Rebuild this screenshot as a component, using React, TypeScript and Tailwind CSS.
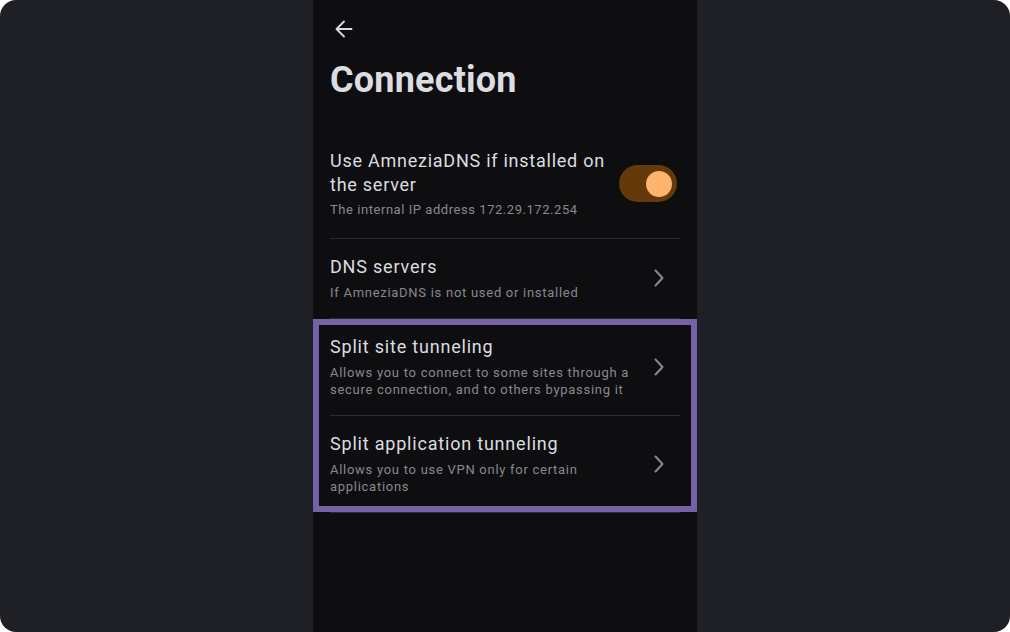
import React, { useState } from 'react';

interface Row {
  id: string;
  title: string;
  description: string;
}

const splitRows: Row[] = [
  {
    id: 'sites',
    title: 'Split site tunneling',
    description: 'Allows you to connect to some sites through a secure connection, and to others bypassing it',
  },
  {
    id: 'apps',
    title: 'Split application tunneling',
    description: 'Allows you to use VPN only for certain applications',
  },
];

const Chevron: React.FC = () => (
  <svg width="10" height="18" viewBox="0 0 10 18" fill="none" className="mr-[16px] shrink-0">
    <path d="M1.5 1.5L8.5 9L1.5 16.5" stroke="#878a90" strokeWidth="2" strokeLinecap="round" strokeLinejoin="round" />
  </svg>
);

const NavRow: React.FC<{ row: Row }> = ({ row }) => (
  <div className="flex items-center justify-between pt-4 pb-[17px] border-b border-[#2a2b30]">
    <div className="w-[308px]">
      <p className="text-[18px] leading-[24px] tracking-[0.8px] text-[#dcdde0]">{row.title}</p>
      <p className="mt-[5px] text-[13px] leading-[17px] tracking-[0.72px] text-[#87898f]">{row.description}</p>
    </div>
    <Chevron />
  </div>
);

const Connection: React.FC = () => {
  const [amneziaDns, setAmneziaDns] = useState(true);

  return (
    <div className="w-[1010px] h-[632px] bg-white">
      <div
        className="w-full h-full rounded-[16px] bg-[#1f2025] flex justify-center overflow-hidden"
        style={{ fontFamily: 'Roboto, "Noto Sans", sans-serif' }}
      >
        <div className="w-[384px] h-full bg-[#0e0e11] px-[17px]">
          {/* Header */}
          <div className="pt-[20px] pl-[5px]">
            <svg width="18" height="18" viewBox="0 0 18 18" fill="none">
              <path
                d="M16.5 9H1.8M9 1.5L1.5 9L9 16.5"
                stroke="#dcdde0"
                strokeWidth="1.8"
                strokeLinecap="round"
                strokeLinejoin="round"
              />
            </svg>
          </div>
          <h1 className="mt-[20px] mb-[31px] text-[36px] leading-[44px] font-bold tracking-[0.2px] text-[#dcdde0]">Connection</h1>

          {/* AmneziaDNS toggle */}
          <div className="flex items-center justify-between pt-4 pb-[20px] border-b border-[#2a2b30]">
            <div className="w-[292px]">
              <p className="text-[18px] leading-[24px] tracking-[0.75px] text-[#dcdde0]">Use AmneziaDNS if installed on the server</p>
              <p className="mt-[4px] text-[13px] leading-[17px] tracking-[0.55px] text-[#87898f]">The internal IP address 172.29.172.254</p>
            </div>
            <button
              onClick={() => setAmneziaDns(!amneziaDns)}
              className={`mr-[3px] w-[58px] h-[37px] rounded-full flex items-center px-[5px] shrink-0 ${
                amneziaDns ? 'bg-[#643a0a] justify-end' : 'bg-[#2a2b30] justify-start'
              }`}
            >
              <span className={`w-[26px] h-[26px] rounded-full ${amneziaDns ? 'bg-[#fdb46c]' : 'bg-[#87898f]'}`}></span>
            </button>
          </div>

          {/* DNS servers */}
          <NavRow
            row={{ id: 'dns', title: 'DNS servers', description: 'If AmneziaDNS is not used or installed' }}
          />

          {/* Split tunneling, highlighted */}
          <div className="relative">
            {splitRows.map(row => (
              <NavRow key={row.id} row={row} />
            ))}
            <div className="absolute top-0 bottom-[1px] left-[-17px] right-[-17px] border-[6px] border-[#7461a8] pointer-events-none"></div>
          </div>
        </div>
      </div>
    </div>
  );
};

export default Connection;
